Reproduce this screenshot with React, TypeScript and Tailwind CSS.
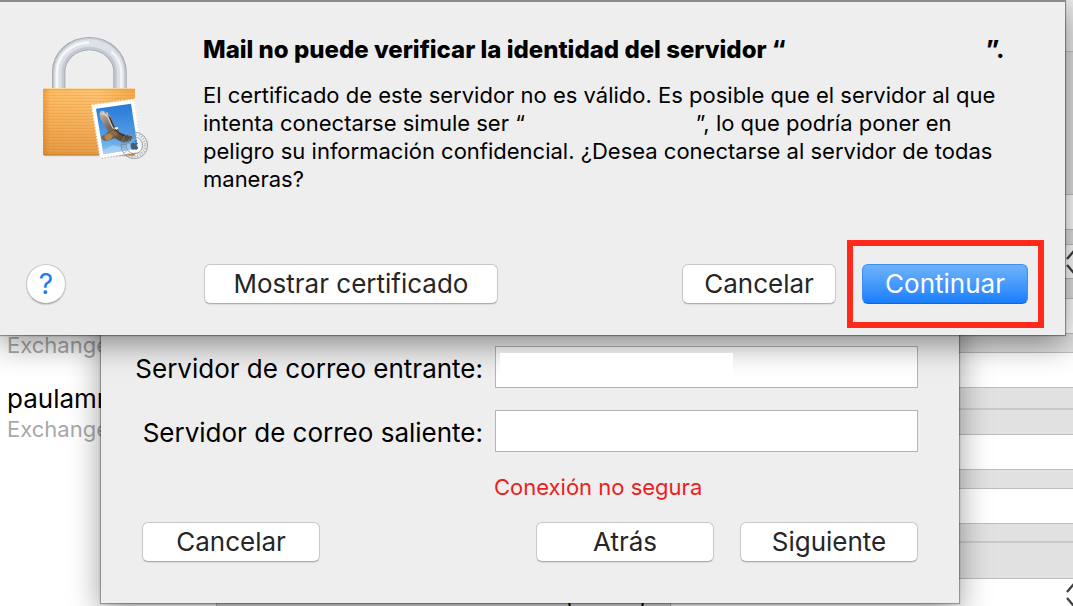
import type { ReactNode } from "react";
import clsx from "clsx";

type ButtonProps = {
  children: ReactNode;
  primary?: boolean;
  className?: string;
};

function PushButton({ children, primary, className }: ButtonProps) {
  return (
    <button
      type="button"
      className={clsx(
        "h-10 rounded-md text-center text-[26px] leading-9",
        primary
          ? "border border-[#3d8df5] border-b-[#0f62f4] bg-linear-to-b from-[#6db3fa] to-[#157efb] text-white"
          : "border border-[#c8c8c8] border-b-[#adadad] bg-white text-[#262626] shadow-[0_1px_1px_rgba(0,0,0,0.08)]",
        className,
      )}
    >
      {children}
    </button>
  );
}

function Stepper() {
  return (
    <svg viewBox="0 0 16 24" className="h-6 w-4 shrink-0" fill="none" stroke="#404040" strokeWidth="2.4">
      <path d="M2 9 8 2l6 7M2 15l6 7 6-7" />
    </svg>
  );
}

function LockIcon() {
  return (
    <svg viewBox="0 0 450 450" className="h-[150px] w-[150px]" aria-hidden="true">
      <defs>
        <linearGradient id="body" x1="0" x2="1">
          <stop offset="0" stopColor="#f09a35" />
          <stop offset=".08" stopColor="#ffbd63" />
          <stop offset=".6" stopColor="#ffc573" />
          <stop offset="1" stopColor="#f3a545" />
        </linearGradient>
        <linearGradient id="shade" x1="0" y1="0" x2="0" y2="1">
          <stop offset="0" stopColor="#d97a1b" stopOpacity="0" />
          <stop offset="1" stopColor="#c46812" stopOpacity=".45" />
        </linearGradient>
        <linearGradient id="sky" x1="0" y1="0" x2="0" y2="1">
          <stop offset="0" stopColor="#2878d6" />
          <stop offset=".6" stopColor="#4e9ce6" />
          <stop offset="1" stopColor="#8fc5ef" />
        </linearGradient>
        <linearGradient id="wing" x1="0" y1="0" x2="1" y2="1">
          <stop offset="0" stopColor="#c9c6c0" />
          <stop offset=".4" stopColor="#7b6a56" />
          <stop offset="1" stopColor="#4b3a2a" />
        </linearGradient>
        <pattern id="ridges" width="10" height="9" patternUnits="userSpaceOnUse">
          <rect y="0" width="10" height="2" fill="#d98225" opacity=".5" />
          <rect y="2" width="10" height="2" fill="#ffd892" opacity=".5" />
        </pattern>
      </defs>

      <path d="M116 212V156a92 85 0 0 1 184 0v56" fill="none" stroke="#9ea3aa" strokeWidth="40" />
      <path d="M116 212V156a92 85 0 0 1 184 0v56" fill="none" stroke="#c4c9d0" strokeWidth="35" />
      <path d="M114 212V156a94 87 0 0 1 188 0v56" fill="none" stroke="#dde1e7" strokeWidth="22" />
      <path d="M111 205V156a96 88 0 0 1 96-88" fill="none" stroke="#f5f7fa" strokeWidth="8" />
      <path d="M304 205V156a96 88 0 0 0-30-62" fill="none" stroke="#f3f5f8" strokeWidth="7" />

      <rect x="72" y="400" width="272" height="9" rx="4" fill="#a9a098" opacity=".6" />
      <rect x="69" y="205" width="276" height="201" rx="5" fill="url(#body)" />
      <rect x="69" y="211" width="276" height="194" fill="url(#ridges)" />
      <rect x="69" y="205" width="276" height="201" rx="5" fill="url(#shade)" />
      <path d="M72 207h270" stroke="#fff0c8" strokeWidth="3" />
      <path d="M70 209h274M71 404h272" stroke="#a8641d" strokeWidth="2" opacity=".7" />

      <path d="m219 258 125-17 18 157-122 19z" fill="#8b7351" opacity=".5" />
      <path d="m216 256 127-18 19 157-121 19z" fill="#fff" />
      <path d="m216 256 127-18 19 157-121 19z" fill="none" stroke="#fff" strokeWidth="5" strokeDasharray="5 4" />
      <path d="m228 266 105-15 21 135-104 17z" fill="url(#sky)" />
      <path d="m248 390 30-14 25 5 35-14 13 4 3 15-104 17z" fill="#b9dcf5" opacity=".55" />
      <path d="m238 283 5-12 4 5 5-5 3 7 7-2 2 7 6 2 3 11 5 8 5 17 9-2 7 5-6 5 6 8 14 6 22 6 4 5-7 3 2 5-11-1 4 5-15-1 3 4-16-6-16-9-11 5-13 4-11-3-4-11 13-7 8-10-12-15-10-17z" fill="url(#wing)" />
      <path d="m242 280 12 4 10 8 8 20 8 14M247 274l8 10M262 278l-2 10" fill="none" stroke="#e6e2dc" strokeWidth="3" />
      <path d="m268 290 9 20 8 17 12 13 25 12" fill="none" stroke="#2f2419" strokeWidth="3" />
      <path d="m253 346 18-7 10 6-8 13-12 4-6-6z" fill="#b58550" />
      <path d="m268 338 12-6 10 6 4 8-16 2z" fill="#8f6b44" />
      <path d="m281 324 10-4 6 4-8 5z" fill="#f4f2ee" />

      <g fill="none" stroke="#7d8794" opacity=".75">
        <circle cx="343" cy="376" r="40" strokeWidth="3" />
        <circle cx="343" cy="376" r="25" strokeWidth="3" />
        <circle cx="343" cy="376" r="33" strokeWidth="8" strokeDasharray="3 5" opacity=".7" />
        <path d="M302 366q10-8 20 0t20 0M302 376q10-8 20 0M302 386q10-8 20 0" strokeWidth="2" />
      </g>
      <path d="M342 367q4-8 9-8 0 6-9 8m1 3c5-4 9-3 11 0-6 4-5 10 1 12-3 8-7 9-12 6-5 3-9 0-11-8-2-9 4-14 11-10" fill="#445c80" />
    </svg>
  );
}

// Bands of the preferences pane; every field row is followed by a grey gap.
const bands = [
  "h-[51px] bg-[#ececec]",
  "h-[143px] border-t border-[#c4c4c4] bg-[#e1e1e1]",
  "h-9 border-y border-[#bdbdbd] bg-white",
  "h-[14px] bg-[#e1e1e1]",
  "stepper",
  "h-[19px] bg-[#e1e1e1]",
  "h-9 border-y border-[#bdbdbd] bg-white",
  "h-[18px] bg-[#e1e1e1]",
  "h-9 border-y border-[#bdbdbd] bg-white",
  "h-5 bg-[#e1e1e1]",
  "h-[26px] border-t-2 border-[#c9c9c9] bg-[#e1e1e1]",
  "h-9 border-y border-[#bdbdbd] bg-white",
  "h-[18px] bg-[#e1e1e1]",
  "h-9 border-y border-[#bdbdbd] bg-white",
  "h-[17px] bg-[#e1e1e1]",
  "h-[37px] border-t-2 border-[#c9c9c9] bg-[#e1e1e1]",
];

function AccountsPane() {
  return (
    <div className="flex min-h-screen">
      <aside className="w-[217px] shrink-0 border-r border-[#b5b5b5] bg-white pt-[331px] pl-[7px]">
        <p className="text-[22px] leading-7 text-[#a8a8a8]">Exchange</p>
        <p className="mt-6 text-[26px] leading-8 text-black">paulamm</p>
        <p className="text-[22px] leading-7 text-[#a8a8a8]">Exchange</p>
      </aside>
      <main className="flex min-w-0 flex-1 flex-col bg-[#e1e1e1]">
        {bands.map((band, i) =>
          band === "stepper" ? (
            <div key={i} className="-mr-2 flex h-[35px] items-center justify-end border-y border-[#bdbdbd] bg-white">
              <Stepper />
            </div>
          ) : (
            <div key={i} className={clsx("shrink-0", band)} />
          ),
        )}
        <div className="-mr-2 flex h-7 flex-1 border-t border-[#bdbdbd] bg-white">
          <div className="flex w-[454px] justify-end gap-16 border-r border-[#b5b5b5] bg-[#e1e1e1] pt-2 pr-6 text-[22px] leading-7 text-black">
            <span>(</span>
            <span>)</span>
          </div>
          <div className="flex flex-1 items-start justify-end pt-1">
            <Stepper />
          </div>
        </div>
      </main>
    </div>
  );
}

function ServerSheet() {
  return (
    <form className="absolute top-0 right-[114px] left-[101px] bg-[#eee] pt-[346px] pr-[41px] pb-[41px] shadow-[0_0_1px_1px_rgba(0,0,0,0.3),0_10px_30px_rgba(0,0,0,0.4)]">
      <div className="grid grid-cols-[382px_1fr] items-center gap-x-3 gap-y-[22px] text-[26px] leading-8 text-black">
        <label htmlFor="incoming" className="pt-1 text-right whitespace-nowrap">
          Servidor de correo entrante:
        </label>
        <div className="relative">
          <input id="incoming" type="text" className="block h-[42px] w-full border border-[#b4b4b4] bg-white px-2" />
          <span className="absolute top-[7px] left-[5px] z-20 h-7 w-[233px] bg-white" />
        </div>
        <label htmlFor="outgoing" className="pt-1 text-right whitespace-nowrap">
          Servidor de correo saliente:
        </label>
        <input id="outgoing" type="text" className="block h-[42px] w-full border border-[#b4b4b4] bg-white px-2" />
      </div>
      <p className="mt-[21px] ml-[393px] text-[22px] leading-7 text-[#ec2020]">Conexión no segura</p>
      <div className="mt-[21px] flex gap-[26px] pl-[41px]">
        <PushButton className="mr-auto w-[178px]">Cancelar</PushButton>
        <PushButton className="w-[178px]">Atrás</PushButton>
        <PushButton className="w-[178px]">Siguiente</PushButton>
      </div>
    </form>
  );
}

function CertificateAlert() {
  return (
    <section
      role="alertdialog"
      aria-labelledby="alert-title"
      className="absolute top-0 right-2 left-0 z-10 border-t-2 border-[#8a8a8a] bg-[#eee] pr-[37px] pb-[31px] shadow-[0_0_1px_1px_rgba(0,0,0,0.35),0_8px_30px_rgba(0,0,0,0.45)]"
    >
      <div className="flex pl-5">
        <div className="w-[183px] shrink-0 pt-[18px]">
          <LockIcon />
        </div>
        <div className="h-[262px] min-w-0 flex-1 pt-[34px] text-black">
          <h1 id="alert-title" className="text-2xl leading-7 font-extrabold whitespace-nowrap">
            Mail no puede verificar la identidad del servidor “
            <span className="inline-block w-[200px]" />
            ”.
          </h1>
          <p className="mt-[17px] text-[22px] leading-7 whitespace-nowrap">
            El certificado de este servidor no es válido. Es posible que el servidor al que
            <br />
            intenta conectarse simule ser “<span className="inline-block w-[171px]" />”, lo que podría poner en
            <br />
            peligro su información confidencial. ¿Desea conectarse al servidor de todas
            <br />
            maneras?
          </p>
        </div>
      </div>
      <div className="flex items-center pl-[26px]">
        <button
          type="button"
          aria-label="Ayuda"
          className="h-10 w-10 rounded-full border border-[#c8c8c8] border-b-[#adadad] bg-white text-[28px] leading-9 text-[#147efb] shadow-[0_1px_1px_rgba(0,0,0,0.15)]"
        >
          ?
        </button>
        <PushButton className="mr-auto ml-[138px] w-[294px]">Mostrar certificado</PushButton>
        <PushButton className="mr-[26px] w-[154px]">Cancelar</PushButton>
        <div className="relative">
          <PushButton primary className="block w-[166px]">
            Continuar
          </PushButton>
          <span className="pointer-events-none absolute -inset-y-6 -right-4 -left-[15px] border-6 border-[#ff2a1c]" />
        </div>
      </div>
    </section>
  );
}

export default function App() {
  return (
    <div className="relative min-h-screen overflow-hidden font-['Inter','Liberation_Sans',sans-serif]">
      <AccountsPane />
      <ServerSheet />
      <CertificateAlert />
    </div>
  );
}
